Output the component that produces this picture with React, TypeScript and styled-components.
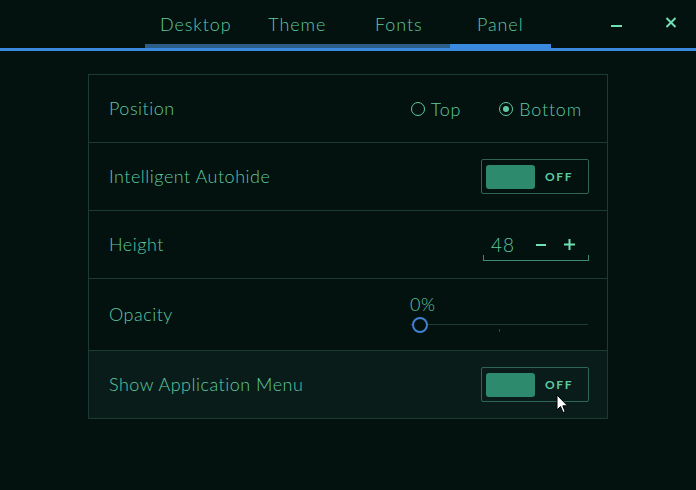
import React from "react";
import styled, { createGlobalStyle } from "styled-components";

const C = {
  bg: "#03110f",
  text: "#5fcaa2",
  textBright: "#6fe0b4",
  border: "#1d3a33",
  thumb: "#2d8a6c",
  blue: "#3a8ae0",
  blueDim: "#2b5d86",
};

const Global = createGlobalStyle`
  html, body { margin: 0; padding: 0; background: ${C.bg}; }
  body { font-family: "Lato", "DejaVu Sans", sans-serif; color: ${C.text}; }
  * { box-sizing: border-box; }
`;

const Window = styled.div`
  width: 696px;
  height: 490px;
  background: ${C.bg};
  position: relative;
  overflow: hidden;
`;

const Header = styled.div`
  display: grid;
  grid-template-columns: 1fr auto 1fr;
  align-items: end;
  height: 48px;
`;

const Tabs = styled.div`
  grid-column: 2;
  display: flex;
`;

const Tab = styled.div<{ $active?: boolean }>`
  width: 101.5px;
  height: 48px;
  display: flex;
  align-items: center;
  justify-content: center;
  padding-top: 4px;
  font-size: 18px;
  letter-spacing: 0.9px;
  font-weight: 300;
  color: ${C.text};
  border-bottom: 4px solid ${(p) => (p.$active ? C.blue : C.blueDim)};
`;

const Controls = styled.div`
  grid-column: 3;
  align-self: stretch;
  display: flex;
  justify-content: flex-end;
  align-items: flex-start;
  padding: 13px 18px 0 0;
  gap: 40px;
`;

const CtrlBtn = styled.div`
  width: 14px;
  height: 20px;
  display: flex;
  align-items: center;
  justify-content: center;
`;

const Line = styled.div`
  height: 3px;
  background: ${C.blue};
`;

const Card = styled.div`
  width: 520px;
  margin: 23px auto 0;
  border: 1px solid ${C.border};
`;

const Row = styled.div<{ $h?: number; $hover?: boolean }>`
  height: ${(p) => p.$h ?? 68}px;
  display: flex;
  align-items: center;
  justify-content: space-between;
  padding: 0 18px 0 20px;
  background: ${(p) => (p.$hover ? "#0a1c19" : "transparent")};
  border-bottom: 1px solid ${C.border};
  &:last-child { border-bottom: none; }
`;

const Label = styled.div`
  font-size: 18px;
  font-weight: 300;
  letter-spacing: 0.5px;
  color: ${C.text};
  margin-top: -1px;
`;

const Radios = styled.div`
  display: flex;
  gap: 38px;
  padding-right: 7px;
`;

const Radio = styled.div`
  display: flex;
  align-items: center;
  gap: 6px;
  font-size: 18px;
  font-weight: 300;
  letter-spacing: 0.8px;
`;

const RadioCircle = styled.span<{ $on?: boolean }>`
  width: 14px;
  height: 14px;
  border-radius: 50%;
  border: 1.5px solid ${C.text};
  display: flex;
  align-items: center;
  justify-content: center;
  &::after {
    content: "";
    width: 6px;
    height: 6px;
    border-radius: 50%;
    background: ${C.text};
    display: ${(p) => (p.$on ? "block" : "none")};
  }
`;

const Toggle = styled.div`
  width: 108px;
  height: 35px;
  border: 1px solid #2e6656;
  border-radius: 2px;
  display: flex;
  align-items: center;
  padding: 0 4px;
  gap: 10px;
`;

const Thumb = styled.div`
  width: 49px;
  height: 24px;
  border-radius: 3px;
  background: ${C.thumb};
`;

const ToggleText = styled.span`
  font-size: 12px;
  font-weight: 700;
  letter-spacing: 1.6px;
  color: ${C.text};
`;

const Spin = styled.div`
  position: relative;
  width: 106px;
  height: 28px;
  display: flex;
  align-items: center;
  padding: 0 0 4px 8px;
  margin-top: 4px;
  &::after {
    content: "";
    position: absolute;
    left: 0;
    right: 0;
    bottom: 0;
    height: 5px;
    border: 1px solid #3e8a72;
    border-top: none;
  }
`;

const SpinValue = styled.span`
  font-size: 19px;
  font-weight: 300;
  letter-spacing: 1px;
  width: 49px;
`;

const SpinBtn = styled.span`
  width: 20px;
  display: flex;
  justify-content: center;
  margin-right: 11px;
`;

const Slider = styled.div`
  width: 178px;
  display: flex;
  flex-direction: column;
  gap: 2px;
  margin-right: 1px;
  margin-top: -4px;
`;

const SliderValue = styled.span`
  font-size: 18px;
  font-weight: 300;
  letter-spacing: 0.5px;
`;

const Track = styled.div`
  position: relative;
  height: 16px;
  &::before {
    content: "";
    position: absolute;
    left: 0;
    right: 0;
    top: 7px;
    height: 1px;
    background: #1f3c35;
  }
  &::after {
    content: "";
    position: absolute;
    left: 89px;
    top: 12px;
    width: 1px;
    height: 3px;
    background: #2a4a42;
  }
`;

const Knob = styled.div`
  position: absolute;
  left: 2px;
  top: 0;
  width: 16px;
  height: 16px;
  border-radius: 50%;
  border: 2.5px solid #3f80d2;
  background: ${C.bg};
  z-index: 1;
`;

const Cursor = styled.svg`
  position: absolute;
  left: 556px;
  top: 394px;
`;

export default function App() {
  return (
    <Window>
      <Global />
      <Header>
        <Tabs>
          <Tab>Desktop</Tab>
          <Tab>Theme</Tab>
          <Tab>Fonts</Tab>
          <Tab $active>Panel</Tab>
        </Tabs>
        <Controls>
          <CtrlBtn>
            <svg width="12" height="20" viewBox="0 0 12 20">
              <rect x="0" y="12" width="11" height="2" fill={C.textBright} />
            </svg>
          </CtrlBtn>
          <CtrlBtn>
            <svg width="12" height="20" viewBox="0 0 12 20">
              <path d="M1.5 5 L10.5 14 M10.5 5 L1.5 14" stroke={C.textBright} strokeWidth="2" />
            </svg>
          </CtrlBtn>
        </Controls>
      </Header>
      <Line />
      <Card>
        <Row>
          <Label>Position</Label>
          <Radios>
            <Radio>
              <RadioCircle />
              Top
            </Radio>
            <Radio>
              <RadioCircle $on />
              Bottom
            </Radio>
          </Radios>
        </Row>
        <Row>
          <Label>Intelligent Autohide</Label>
          <Toggle>
            <Thumb />
            <ToggleText>OFF</ToggleText>
          </Toggle>
        </Row>
        <Row>
          <Label>Height</Label>
          <Spin>
            <SpinValue>48</SpinValue>
            <SpinBtn>
              <svg width="10" height="10" viewBox="0 0 10 10">
                <rect x="0" y="4" width="10" height="2" fill={C.textBright} />
              </svg>
            </SpinBtn>
            <SpinBtn>
              <svg width="11" height="11" viewBox="0 0 11 11">
                <rect x="0" y="4.5" width="11" height="2" fill={C.textBright} />
                <rect x="4.5" y="0" width="2" height="11" fill={C.textBright} />
              </svg>
            </SpinBtn>
          </Spin>
        </Row>
        <Row $h={72}>
          <Label>Opacity</Label>
          <Slider>
            <SliderValue>0%</SliderValue>
            <Track>
              <Knob />
            </Track>
          </Slider>
        </Row>
        <Row $hover $h={67}>
          <Label>Show Application Menu</Label>
          <Toggle>
            <Thumb />
            <ToggleText>OFF</ToggleText>
          </Toggle>
        </Row>
      </Card>
      <Cursor width="13" height="20" viewBox="0 0 13 20">
        <path d="M1 1 L1 16 L4.5 12.5 L7 18.5 L9.2 17.6 L6.8 11.8 L11.5 11.8 Z" fill="#fff" stroke="#000" strokeWidth="1" />
      </Cursor>
    </Window>
  );
}
